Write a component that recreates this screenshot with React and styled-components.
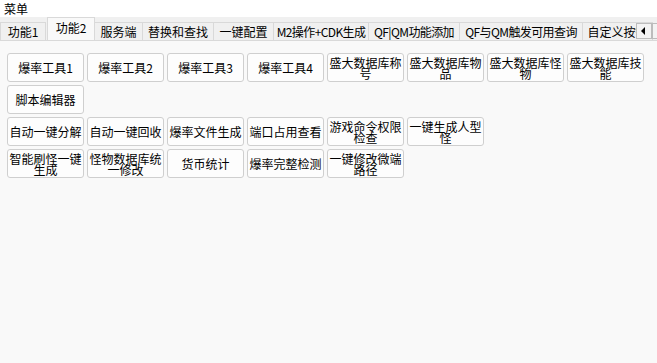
import React from "react";
import styled, { createGlobalStyle } from "styled-components";

const Global = createGlobalStyle`
  html, body { margin: 0; padding: 0; background: #f9f9f9; }
  body { font-family: "Noto Sans CJK SC", "Noto Sans", sans-serif; }
  * { box-sizing: border-box; }
`;

const Window = styled.div`
  width: 657px;
  height: 363px;
  display: flex;
  flex-direction: column;
  background: #f9f9f9;
  overflow: hidden;
`;

const MenuBar = styled.div`
  height: 17px;
  background: #ffffff;
  display: flex;
  align-items: center;
  padding-left: 4px;
  font-size: 12px;
  color: #000;
`;

const MenuItem = styled.span`
  line-height: 17px;
`;

const TabStrip = styled.div`
  position: relative;
  height: 24px;
  background: #f0f0f0;
  border-bottom: 1px solid #d9d9d9;
  display: flex;
  align-items: flex-end;
  overflow: hidden;
  flex-shrink: 0;
`;

const Tab = styled.div`
  flex: 0 0 auto;
  width: ${(p) => p.w}px;
  height: ${(p) => (p.active ? 24 : 18)}px;
  margin-bottom: ${(p) => (p.active ? -1 : 0)}px;
  margin-left: ${(p) => (p.active ? 1 : 0)}px;
  background: ${(p) => (p.active ? "#f9f9f9" : "#f0f0f0")};
  border: 1px solid #d9d9d9;
  border-bottom: none;
  border-left-width: ${(p) => (p.first || p.active ? 1 : 0)}px;
  font-size: 12px;
  letter-spacing: ${(p) => (p.tight ? "-0.6px" : "0")};
  line-height: ${(p) => (p.active ? 20 : 17)}px;
  color: #000;
  text-align: center;
  white-space: nowrap;
  overflow: hidden;
  position: relative;
  z-index: ${(p) => (p.active ? 2 : 1)};
`;

const Scroller = styled.div`
  position: absolute;
  left: 636px;
  top: 6px;
  display: flex;
  z-index: 3;
`;

const ScrollBtn = styled.div`
  width: 16px;
  height: 16px;
  background: #f3f3f3;
  border: 1px solid #bcbcbc;
  display: flex;
  align-items: center;
  justify-content: center;
`;

const Content = styled.div`
  flex: 1;
  padding: 12px 0 0 7px;
  display: flex;
  flex-direction: column;
  gap: 3px;
`;

const Row = styled.div`
  display: flex;
  gap: 3px;
`;

const Button = styled.div`
  width: 77px;
  height: 29px;
  background: #fdfdfd;
  border: 1px solid #cfcfcf;
  border-radius: 3px;
  display: flex;
  align-items: center;
  justify-content: center;
  text-align: center;
  padding: 0 1px;
  font-size: 12px;
  line-height: 11px;
  color: #000;
`;

const tabs = [
  { t: "功能1", w: 46, first: true },
  { t: "功能2", w: 48, active: true },
  { t: "服务端", w: 48 },
  { t: "替换和查找", w: 71 },
  { t: "一键配置", w: 60 },
  { t: "M2操作+CDK生成", w: 95, tight: true },
  { t: "QF|QM功能添加", w: 91, tight: true },
  { t: "QF与QM触发可用查询", w: 123, tight: true },
  { t: "自定义按钮", w: 70 },
];

const rows = [
  ["爆率工具1", "爆率工具2", "爆率工具3", "爆率工具4", "盛大数据库称号", "盛大数据库物品", "盛大数据库怪物", "盛大数据库技能"],
  ["脚本编辑器"],
  ["自动一键分解", "自动一键回收", "爆率文件生成", "端口占用查看", "游戏命令权限检查", "一键生成人型怪"],
  ["智能刷怪一键生成", "怪物数据库统一修改", "货币统计", "爆率完整检测", "一键修改微端路径"],
];

export default function App() {
  return (
    <Window>
      <Global />
      <MenuBar>
        <MenuItem>菜单</MenuItem>
      </MenuBar>
      <TabStrip>
        {tabs.map((x) => (
          <Tab key={x.t} w={x.w} active={x.active} first={x.first} tight={x.tight}>
            {x.t}
          </Tab>
        ))}
        <Scroller>
          <ScrollBtn>
            <svg width="6" height="8" viewBox="0 0 6 8">
              <polygon points="4,0 4,8 0,4" fill="#000" />
            </svg>
          </ScrollBtn>
          <ScrollBtn>
            <svg width="6" height="8" viewBox="0 0 6 8">
              <polygon points="2,0 2,8 6,4" fill="#000" />
            </svg>
          </ScrollBtn>
        </Scroller>
      </TabStrip>
      <Content>
        {rows.map((r, i) => (
          <Row key={i}>
            {r.map((b) => (
              <Button key={b}>{b}</Button>
            ))}
          </Row>
        ))}
      </Content>
    </Window>
  );
}
